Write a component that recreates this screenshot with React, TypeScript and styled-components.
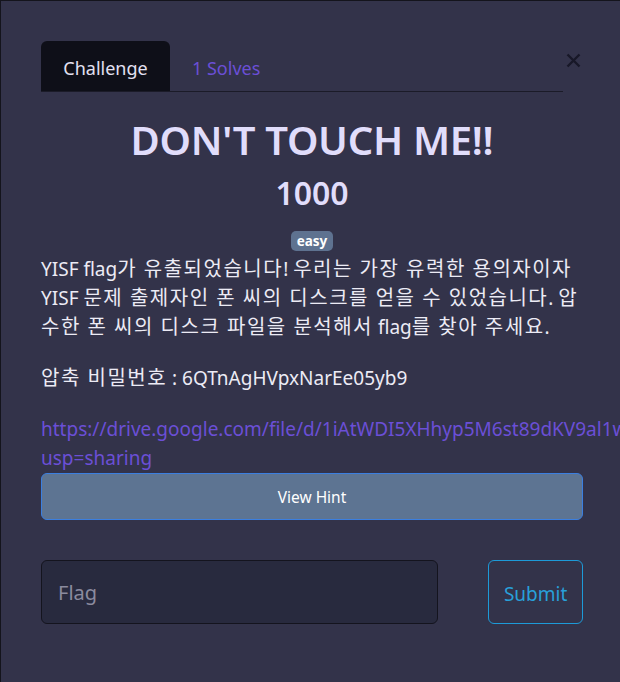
import React from "react";
import styled, { createGlobalStyle } from "styled-components";

const Global = createGlobalStyle`
  html, body {
    margin: 0;
    padding: 0;
    background: #33334a;
    overflow: hidden;
  }
  * { box-sizing: border-box; }
`;

const FONT = `"Noto Sans", "Noto Sans CJK KR", sans-serif`;

const Modal = styled.div`
  position: relative;
  width: 620px;
  height: 682px;
  background: #33334a;
  border-top: 1px solid #14141c;
  border-left: 1px solid #14141c;
  padding: 40px 36px 0 40px;
  font-family: ${FONT};
  color: #ecebf5;
`;

const Close = styled.button`
  position: absolute;
  top: 50px;
  right: 38px;
  width: 18px;
  height: 18px;
  padding: 0;
  border: none;
  background: transparent;
  display: flex;
  align-items: center;
  justify-content: center;
`;

const TabBar = styled.div`
  display: flex;
  align-items: stretch;
  width: 522px;
  height: 51px;
  border-bottom: 1px solid #1b1b28;
`;

const Tab = styled.div<{ $active?: boolean }>`
  display: flex;
  align-items: center;
  justify-content: center;
  width: ${(p) => (p.$active ? "129px" : "auto")};
  padding: ${(p) => (p.$active ? "0" : "0 22px")};
  background: ${(p) => (p.$active ? "#0e0f18" : "transparent")};
  border-radius: 6px 6px 0 0;
  font-size: 18px;
  padding-top: 3px;
  color: ${(p) => (p.$active ? "#e2e0f2" : "#6b4fd6")};
`;

const Body = styled.div`
  width: 542px;
  display: flex;
  flex-direction: column;
  align-items: stretch;
`;

const Title = styled.h1`
  margin: 24px 0 0;
  text-align: center;
  font-size: 40px;
  line-height: 48px;
  font-weight: 600;
  color: #e1ddfb;
  letter-spacing: -0.3px;
`;

const Points = styled.h2`
  margin: 10px 0 0;
  text-align: center;
  font-size: 32px;
  line-height: 38px;
  font-weight: 600;
  color: #e1ddfb;
`;

const BadgeRow = styled.div`
  display: flex;
  justify-content: center;
  margin-top: 19px;
`;

const Badge = styled.span`
  display: inline-flex;
  align-items: center;
  height: 20px;
  padding: 0 6px;
  border-radius: 5px;
  background: #5e7290;
  color: #ffffff;
  font-size: 13.5px;
  font-weight: 700;
`;

const Para = styled.p<{ $gap?: number }>`
  margin: ${(p) => p.$gap ?? 0}px 0 22px;
  font-size: 19px;
  line-height: 29px;
  color: #ecebf5;
`;

const Ko = styled.span`
  font-size: 20px;
  line-height: 20px;
  letter-spacing: 1.5px;
`;

const Link = styled.a`
  display: block;
  font-size: 19px;
  line-height: 29px;
  color: #6b4fd6;
  text-decoration: none;
`;

const HintButton = styled.button`
  height: 47px;
  width: 100%;
  border: 1px solid #3b7fe0;
  border-radius: 6px;
  background: #5d7492;
  color: #ffffff;
  font-family: ${FONT};
  font-size: 15.5px;
`;

const SubmitRow = styled.div`
  display: flex;
  align-items: stretch;
  gap: 50px;
  margin-top: 40px;
  height: 64px;
`;

const FlagInput = styled.input`
  width: 398px;
  height: 100%;
  background: #282a3e;
  border: 1px solid #14141e;
  border-radius: 6px;
  padding: 0 16px;
  color: #e6e6ee;
  font-family: ${FONT};
  font-size: 20px;
  outline: none;
  &::placeholder {
    color: #8b8b9e;
  }
`;

const SubmitButton = styled.button`
  width: 95px;
  height: 100%;
  background: transparent;
  border: 1px solid #1d9ad8;
  border-radius: 6px;
  color: #28a0da;
  font-family: ${FONT};
  font-size: 19px;
  padding: 4px 0 0;
`;

export default function App() {
  return (
    <>
      <Global />
      <Modal>
        <Close aria-label="close">
          <svg width="15" height="15" viewBox="0 0 15 15">
            <path d="M1.5 1.5 L13.5 13.5 M13.5 1.5 L1.5 13.5" stroke="#181828" strokeWidth="2.4" strokeLinecap="butt" />
          </svg>
        </Close>
        <TabBar>
          <Tab $active>Challenge</Tab>
          <Tab>1 Solves</Tab>
        </TabBar>
        <Body>
          <Title>DON'T TOUCH ME!!</Title>
          <Points>1000</Points>
          <BadgeRow>
            <Badge>easy</Badge>
          </BadgeRow>
          <Para $gap={4}>
            YISF flag<Ko>가 유출되었습니다</Ko>! <Ko>우리는 가장 유력한 용의자이자</Ko> YISF <Ko>문제 출제자인 폰 씨의 디스크를 얻을 수 있었습니다</Ko>. <Ko>압수한 폰 씨의 디스크 파일을 분석해서</Ko> flag<Ko>를 찾아 주세요</Ko>.
          </Para>
          <Para>
            <Ko>압축 비밀번호</Ko> : 6QTnAgHVpxNarEe05yb9
          </Para>
          <Link href="#">
            https://drive.google.com/file/d/1iAtWDI5XHhyp5M6st89dKV9al1wQz3R/view?usp=sharing
          </Link>
          <HintButton>View Hint</HintButton>
          <SubmitRow>
            <FlagInput placeholder="Flag" />
            <SubmitButton>Submit</SubmitButton>
          </SubmitRow>
        </Body>
      </Modal>
    </>
  );
}
